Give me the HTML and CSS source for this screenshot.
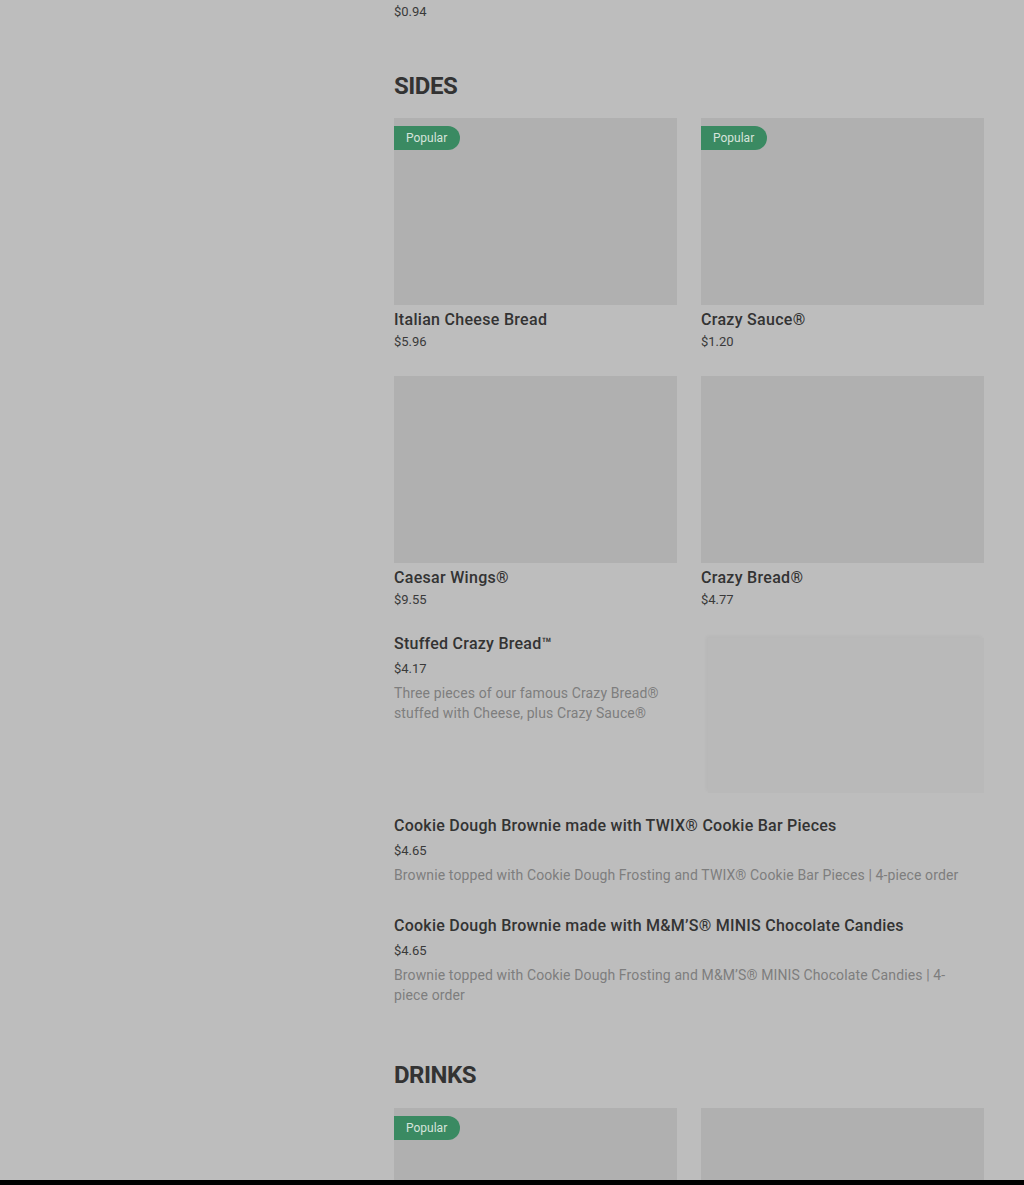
FILE: index.html
```html
<!DOCTYPE html>
<html lang="en">
<head>
  <meta charset="UTF-8">
  <meta name="viewport" content="width=device-width, initial-scale=1.0">
  <title>Menu</title>
  <link rel="stylesheet" href="styles.css">
</head>
<body>
  <main class="menu">
    <div class="card cut-top">
      <div class="card-title">Garlic Sauce</div>
      <div class="card-price">$0.94</div>
    </div>

    <section class="section">
      <h2 class="section-title">SIDES</h2>
      <div class="grid">
        <div class="card">
          <div class="card-image"><span class="badge">Popular</span></div>
          <div class="card-title">Italian Cheese Bread</div>
          <div class="card-price">$5.96</div>
        </div>
        <div class="card">
          <div class="card-image"><span class="badge">Popular</span></div>
          <div class="card-title">Crazy Sauce®</div>
          <div class="card-price">$1.20</div>
        </div>
        <div class="card">
          <div class="card-image"></div>
          <div class="card-title">Caesar Wings®</div>
          <div class="card-price">$9.55</div>
        </div>
        <div class="card">
          <div class="card-image"></div>
          <div class="card-title">Crazy Bread®</div>
          <div class="card-price">$4.77</div>
        </div>
      </div>

      <div class="list">
        <div class="list-item">
          <div class="list-text">
            <div class="list-title">Stuffed Crazy Bread™</div>
            <div class="list-price">$4.17</div>
            <div class="list-desc">Three pieces of our famous Crazy Bread® stuffed with Cheese, plus Crazy Sauce®</div>
          </div>
          <div class="list-image"></div>
        </div>
        <div class="list-item text-only">
          <div class="list-text">
            <div class="list-title">Cookie Dough Brownie made with TWIX® Cookie Bar Pieces</div>
            <div class="list-price">$4.65</div>
            <div class="list-desc">Brownie topped with Cookie Dough Frosting and TWIX® Cookie Bar Pieces | 4-piece order</div>
          </div>
        </div>
        <div class="list-item text-only">
          <div class="list-text">
            <div class="list-title">Cookie Dough Brownie made with M&amp;M’S® MINIS Chocolate Candies</div>
            <div class="list-price">$4.65</div>
            <div class="list-desc">Brownie topped with Cookie Dough Frosting and M&amp;M’S® MINIS Chocolate Candies | 4-piece order</div>
          </div>
        </div>
      </div>
    </section>

    <section class="section">
      <h2 class="section-title">DRINKS</h2>
      <div class="grid">
        <div class="card">
          <div class="card-image"><span class="badge">Popular</span></div>
          <div class="card-title">Pepsi®</div>
          <div class="card-price">$2.39</div>
        </div>
        <div class="card">
          <div class="card-image"></div>
          <div class="card-title">Diet Pepsi®</div>
          <div class="card-price">$2.39</div>
        </div>
      </div>
    </section>
  </main>
  <div class="bottom-bar"></div>
</body>
</html>
```

FILE: styles.css
```css
body {
  margin: 0;
  background-color: #bdbdbd;
  font-family: Roboto, "Liberation Sans", sans-serif;
  color: #2f2f2f;
  overflow: hidden;
}
.menu {
  width: 590px;
  margin-left: 394px;
}
.cut-top {
  margin-top: -22px;
}
.section {
  margin-top: 48px;
}
.section + .section {
  margin-top: 46px;
}
.section + .section .section-title {
  margin-bottom: 17px;
}
.section-title {
  margin: 0 0 16px;
  font-size: 24px;
  line-height: 32px;
  font-weight: 700;
  letter-spacing: -0.5px;
  color: #333;
}
.grid {
  display: grid;
  grid-template-columns: repeat(2, 1fr);
  column-gap: 24px;
  row-gap: 24px;
}
.card-image {
  position: relative;
  height: 187px;
  background-color: #b0b0b0;
  margin-bottom: 3px;
}
.badge {
  position: absolute;
  top: 8px;
  left: 0;
  height: 24px;
  line-height: 24px;
  padding: 0 13px 0 12px;
  font-size: 12px;
  color: #d6e4dc;
  background-color: #3a8a62;
  border-radius: 0 12px 12px 0;
}
.card-title {
  font-size: 16px;
  line-height: 24px;
  font-weight: 500;
  letter-spacing: 0.3px;
  color: #333;
}
.card-price {
  font-size: 13px;
  line-height: 20px;
  color: #3a3a3a;
}
.list {
  margin-top: 24px;
}
.list-item {
  display: flex;
  gap: 24px;
  margin-bottom: 23px;
}
.list-item.text-only {
  padding-bottom: 8px;
}
.list-text {
  flex: 1;
  padding-right: 12px;
}
.list-title {
  font-size: 16px;
  line-height: 20px;
  font-weight: 500;
  letter-spacing: 0.25px;
  color: #333;
}
.list-price {
  margin-top: 5px;
  font-size: 13px;
  line-height: 20px;
  color: #3a3a3a;
}
.list-desc {
  margin-top: 4px;
  font-size: 14px;
  line-height: 20px;
  letter-spacing: 0.12px;
  color: #7e7e7e;
}
.list-image {
  width: 276px;
  height: 155px;
  margin-top: 4px;
  background-color: #b9b9b9;
  box-shadow: -2px -2px 3px rgba(0, 0, 0, 0.03);
}
.bottom-bar {
  position: fixed;
  left: 0;
  right: 0;
  bottom: 0;
  height: 5px;
  background-color: #000;
}
```
